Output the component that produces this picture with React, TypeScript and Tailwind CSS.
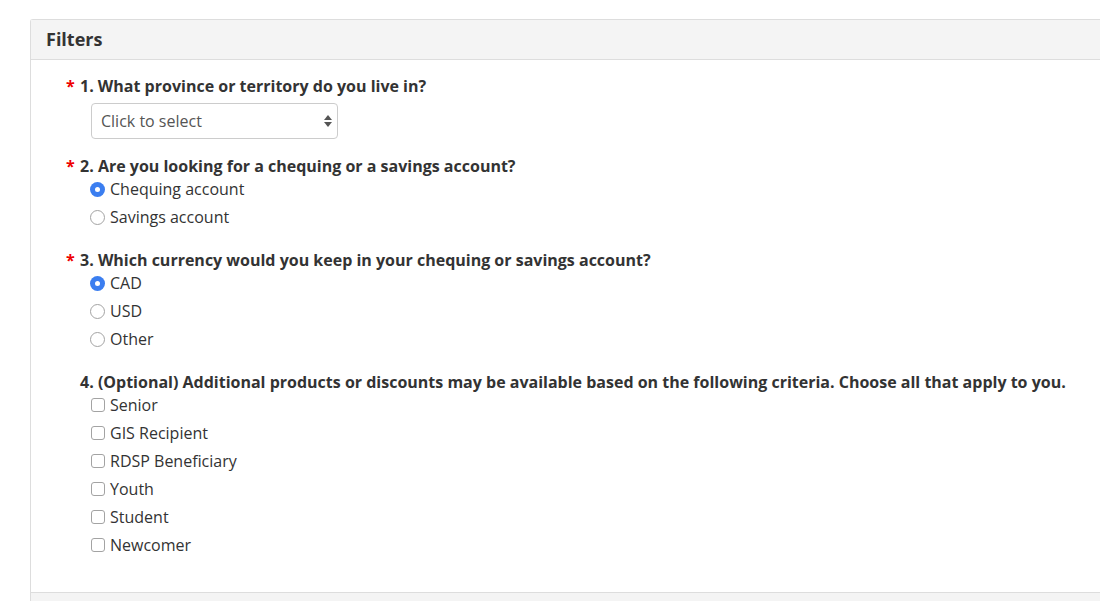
import React from "react"

const font = { fontFamily: '"Open Sans", "Liberation Sans", sans-serif' }

const Radio = ({ checked, label }: { checked?: boolean; label: string }) => (
    <label className="flex items-center h-6 text-base text-[#333]">
        {checked ? (
            <span className="w-[15px] h-[15px] rounded-full bg-[#3b7ef0] flex items-center justify-center mr-[5px]">
                <span className="w-[5px] h-[5px] rounded-full bg-white"></span>
            </span>
        ) : (
            <span className="w-[15px] h-[15px] rounded-full border border-[#a3a3a3] bg-white mr-[5px]"></span>
        )}
        {label}
    </label>
)

const Check = ({ label }: { label: string }) => (
    <label className="flex items-center h-6 text-base text-[#333]">
        <span className="w-[14px] h-[14px] rounded-[3px] border border-[#a3a3a3] bg-white ml-[1px] mr-[5px]"></span>
        {label}
    </label>
)

const Question = ({ n, text, required = true }: { n: string; text: string; required?: boolean }) => (
    <div className="flex items-center h-[22px] text-base font-bold text-[#333]">
        {required ? <span className="text-[#e00] w-[14px]">*</span> : <span className="w-[14px]"></span>}
        {n} {text}
    </div>
)

export default function App() {
    return (
        <div className="min-h-screen bg-white pt-[19px] pl-[30px]" style={font}>
            <div className="border-l border-t border-[#ddd] rounded-tl-[3px]">
                <div className="h-10 bg-[#f4f4f4] border-b border-[#ddd] flex items-center pl-[15px] pb-[2px]">
                    <h2 className="text-lg font-bold text-[#333]">Filters</h2>
                </div>
                <div className="pl-[35px] pt-[14px] pb-[35px]">
                    <div className="flex items-center h-6 text-base font-bold text-[#333]">
                        <span className="text-[#e00] w-[14px]">*</span>
                        1. What province or territory do you live in?
                    </div>
                    <div className="ml-[25px] mt-[5px] w-[247px] h-9 border border-[#ccc] rounded-[4px] flex items-center justify-between pl-[9px] pr-[4px] text-base text-[#555]">
                        <span>Click to select</span>
                        <svg width="10" height="16" viewBox="0 0 10 16">
                            <path d="M5 2 L9 7 H1 Z" fill="#555" />
                            <path d="M5 14 L9 9 H1 Z" fill="#555" />
                        </svg>
                    </div>

                    <div className="mt-4">
                        <Question n="2." text="Are you looking for a chequing or a savings account?" />
                        <div className="ml-[24px] flex flex-col gap-1">
                            <Radio checked label="Chequing account" />
                            <Radio label="Savings account" />
                        </div>
                    </div>

                    <div className="mt-5">
                        <Question n="3." text="Which currency would you keep in your chequing or savings account?" />
                        <div className="ml-[24px] flex flex-col gap-1">
                            <Radio checked label="CAD" />
                            <Radio label="USD" />
                            <Radio label="Other" />
                        </div>
                    </div>

                    <div className="mt-5">
                        <Question
                            n="4."
                            required={false}
                            text="(Optional) Additional products or discounts may be available based on the following criteria. Choose all that apply to you."
                        />
                        <div className="ml-[24px] flex flex-col gap-1">
                            <Check label="Senior" />
                            <Check label="GIS Recipient" />
                            <Check label="RDSP Beneficiary" />
                            <Check label="Youth" />
                            <Check label="Student" />
                            <Check label="Newcomer" />
                        </div>
                    </div>
                </div>
                <div className="h-[20px] border-t border-[#ddd] bg-[#f4f4f4]"></div>
            </div>
        </div>
    )
}
